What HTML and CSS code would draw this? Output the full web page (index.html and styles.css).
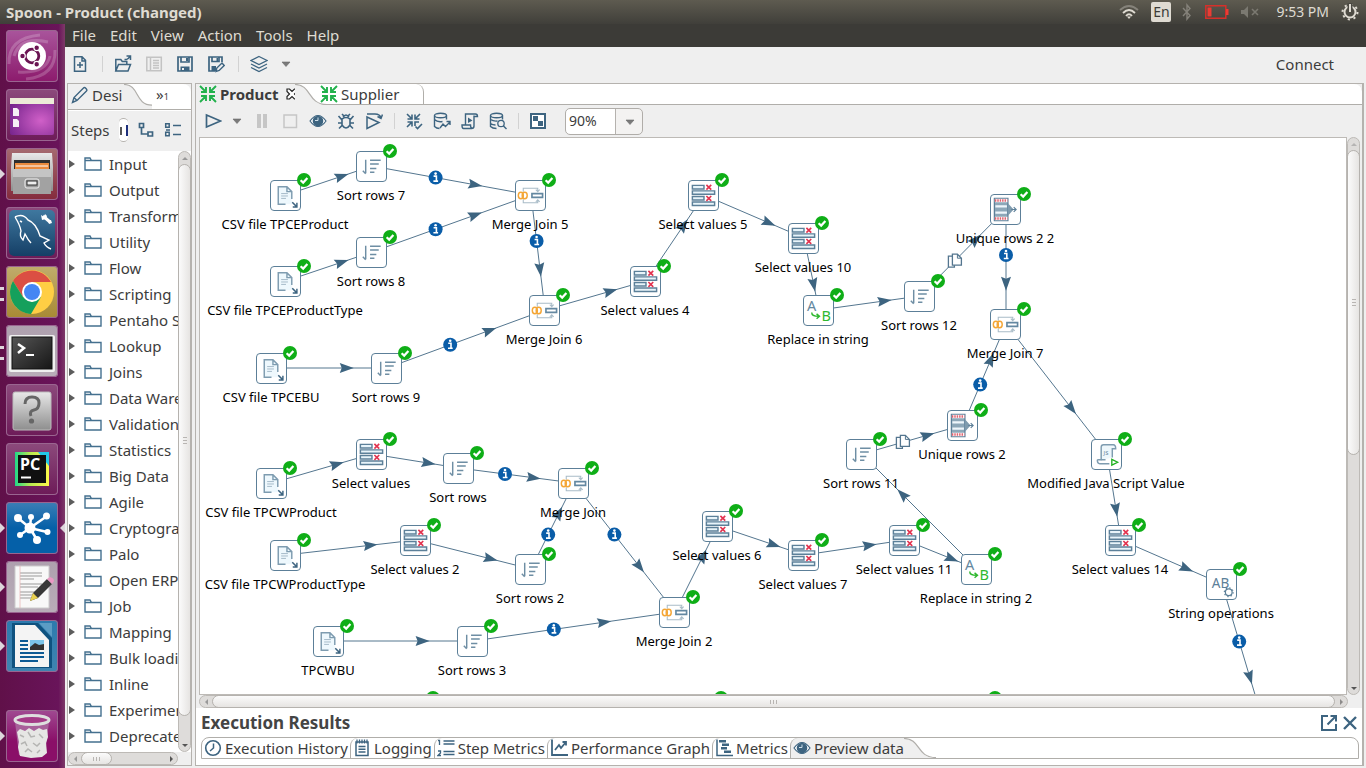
FILE: index.html
```html
<!DOCTYPE html>
<html lang="en">
<head>
<meta charset="utf-8">
<title>Spoon - Product (changed)</title>
<link rel="stylesheet" href="styles.css">
</head>
<body>
<svg class="defs" aria-hidden="true">
  <defs>
    <linearGradient id="metal" x1="0" y1="0" x2="0" y2="1"><stop offset="0" stop-color="#e8e8e8"/><stop offset="1" stop-color="#8e8e8e"/></linearGradient>
    <radialGradient id="desk" cx=".7" cy=".6" r=".8"><stop offset="0" stop-color="#d060c8"/><stop offset="1" stop-color="#76248c"/></radialGradient>
    <linearGradient id="sea" x1="0" y1="0" x2="0" y2="1"><stop offset="0" stop-color="#3f789f"/><stop offset="1" stop-color="#153f66"/></linearGradient>
    <linearGradient id="dark" x1="0" y1="0" x2="1" y2="1"><stop offset="0" stop-color="#555"/><stop offset="1" stop-color="#161616"/></linearGradient>
    <linearGradient id="pc" x1="0" y1="0" x2="1" y2="0"><stop offset="0" stop-color="#21d789"/><stop offset=".45" stop-color="#b8ea50"/><stop offset="1" stop-color="#fcf84a"/></linearGradient>
  </defs>
  <symbol id="i-down" viewBox="0 0 10 6"><path d="M1 1h8L5 5.500z" fill="#7a7a7a" stroke="#6a6a6a" stroke-width=".6"/></symbol>
  <symbol id="i-new" viewBox="0 0 18 18"><path d="M4 1.800h7l3.500 3.500v11H3.500V1.800zM11 2v4h3.500M9 7v6M6 10h6" fill="none" stroke="currentColor" stroke-width="1.500"/></symbol>
  <symbol id="i-open" viewBox="0 0 18 18"><path d="M1.800 16V4.500h5l1.500 2h4.500v3M1.800 16L4.500 9.500h12L14 16zM10.500 4.500h2c1 0 2-1 3.500-3M12.500 1h4v4" fill="none" stroke="currentColor" stroke-width="1.500"/></symbol>
  <symbol id="i-list" viewBox="0 0 18 18"><path d="M1.800 2.300h14.500v13.500H1.800zM5.500 2.500v13M8 5.500h6M8 8h6M8 10.500h6M8 13h6" fill="none" stroke="#c3c3c3" stroke-width="1.500"/></symbol>
  <symbol id="i-save" viewBox="0 0 18 18"><path d="M2 2h14v14H2zM5 2v5h8V2" fill="none" stroke="currentColor" stroke-width="1.700"/><path d="M10 3h2v3h-2zM4.500 11.500h9V16h-9z" fill="currentColor"/><path d="M6 13h2v2H6z" fill="#efefef"/></symbol>
  <symbol id="i-saveas" viewBox="0 0 18 18"><path d="M8 16H2V2h13v5M5 2v4.500h7V2" fill="none" stroke="currentColor" stroke-width="1.700"/><path d="M9.500 3h1.500v3H9.500zM4.500 11H9V16H4.500z" fill="currentColor"/><path d="M9 16.500l.8-3.500 5.200-5 2.200 2.500-5 5z" fill="#efefef" stroke="currentColor" stroke-width="1.400"/></symbol>
  <symbol id="i-layers" viewBox="0 0 18 18"><path d="M9 1.500l8 4-8 4-8-4zM1 9l8 4 8-4M1 12.500l8 4 8-4" fill="none" stroke="currentColor" stroke-width="1.200"/></symbol>
  <symbol id="i-pencil" viewBox="0 0 18 18"><path d="M1.500 16.500l1.500-5L12.500 2q1-1 2.500.5t.5 2.500L6 14.500zM3 11.500l3 3" fill="none" stroke="currentColor" stroke-width="1.400"/></symbol>
  <symbol id="i-tree" viewBox="0 0 18 18"><path d="M2.500 2.500h4v4h-4zM11 11h4.500v4H11zM4.500 6.500V13H11" fill="none" stroke="currentColor" stroke-width="1.700"/></symbol>
  <symbol id="i-rows" viewBox="0 0 18 18"><path d="M1.700 2.700h3.500v3.500H1.700zM1.700 11.200h3.500v3.500H1.700zM9 4.500h8M9 13.500h8M2 9h4" fill="none" stroke="currentColor" stroke-width="1.500"/></symbol>
  <symbol id="i-folder" viewBox="0 0 18 16"><path d="M1 14V2h5l1.500 2.500H17V14zM1 4.500h7" fill="none" stroke="#44708f" stroke-width="1.400"/></symbol>
  <symbol id="i-trans" viewBox="0 0 18 18"><path d="M1 1l5.500 5.500M17 1l-5.500 5.500M1 17l5.500-5.500M17 17l-5.500-5.500M2 7h5V2M11 2v5h5M2 11h5v5M16 11h-5v5" fill="none" stroke="currentColor" stroke-width="1.900"/></symbol>
  <symbol id="i-x" viewBox="0 0 12 12"><path d="M1 1h2.500L6 3.500 8.500 1H11v2.500L8.500 6 11 8.500V11H8.500L6 8.500 3.500 11H1V8.500L3.500 6 1 3.500z" fill="#fff" stroke="#222" stroke-width="1.200"/></symbol>
  <symbol id="i-play" viewBox="0 0 18 18"><path d="M2.500 3l14 6-14 6z" fill="none" stroke="currentColor" stroke-width="1.700"/></symbol>
  <symbol id="i-pause" viewBox="0 0 18 18"><path d="M4 2h4v14H4zM10 2h4v14h-4z" fill="#c6c6c6"/></symbol>
  <symbol id="i-stop" viewBox="0 0 18 18"><path d="M3 3h12.500v12.500H3z" fill="none" stroke="#c6c6c6" stroke-width="1.500"/></symbol>
  <symbol id="i-eye" viewBox="0 0 18 18"><path d="M1 9q8-11 16 0q-8 11-16 0z" fill="#fff" stroke="currentColor" stroke-width="1.200"/><circle cx="9" cy="9" r="5.300" fill="currentColor"/><path d="M9 5.500v3H6" fill="none" stroke="#cfe0ea" stroke-width="1"/></symbol>
  <symbol id="i-bug" viewBox="0 0 18 18"><path d="M5 7q4-3 8 0v6q-4 6-8 0zM6 5.500q3-5 6 0M1.500 4l3.500 4M16.500 4L13 8M1 11h4M13 11h4M2 16.500L5.500 13M16 16.500L12.500 13M5 2l2 2M13 2l-2 2" fill="none" stroke="currentColor" stroke-width="1.600"/></symbol>
  <symbol id="i-replay" viewBox="0 0 18 18"><path d="M2 5l12 5.500-12 6zM2 2h8q5 0 6 4M12.500 4.500L16 6.500l1.500-4" fill="none" stroke="currentColor" stroke-width="1.500"/></symbol>
  <symbol id="i-verify" viewBox="0 0 18 18"><path d="M2 2l5 5M15 2l-5 5M2 15l5-5M2.500 7H7V2.500M10 2.500V7h4.500M2.500 10H7v4.500M10 14v-4h4M10.500 14.500l2 2L17 12" fill="none" stroke="currentColor" stroke-width="1.600"/></symbol>
  <symbol id="i-impact" viewBox="0 0 18 18"><ellipse cx="7.500" cy="3.500" rx="6" ry="2.200" fill="none" stroke="currentColor" stroke-width="1.400"/><path d="M1.500 3.500v11q2 2 5 2M13.500 3.500v4M1.500 7.500q3 3 8 2M7 16l3-4 2.500 2.500L17 10M13.500 9.500H17V13" fill="none" stroke="currentColor" stroke-width="1.400"/></symbol>
  <symbol id="i-sql" viewBox="0 0 18 18"><path d="M4.500 12.500V2h10q2 0 2 2.500H13V14q0 2.500-2.500 2.500h-8Q1 16.500 1 13h8.500q0 3.500 2 3.500M13 5V3.500" fill="none" stroke="currentColor" stroke-width="1.400"/><path d="M7 5.500l4.500 3L7 11z" fill="currentColor"/></symbol>
  <symbol id="i-explore" viewBox="0 0 18 18"><ellipse cx="7.500" cy="3.500" rx="6" ry="2.200" fill="none" stroke="currentColor" stroke-width="1.400"/><path d="M1.500 3.500v11q2 2 6 2M13.500 3.500v4M1.500 7.500q3 2 7 1.500M1.500 11.500q2 1.500 5 1.500" fill="none" stroke="currentColor" stroke-width="1.400"/><circle cx="12" cy="11.500" r="3.200" fill="#efefef" stroke="currentColor" stroke-width="1.300"/><path d="M14.500 14l3 3" stroke="currentColor" stroke-width="1.400"/></symbol>
  <symbol id="i-results" viewBox="0 0 18 18"><path d="M2 2h14v14H2z" fill="#fff" stroke="currentColor" stroke-width="2"/><path d="M4 4h5v5H4zM9 9h5v5H9z" fill="currentColor"/></symbol>
  <symbol id="i-clock" viewBox="0 0 18 18"><circle cx="9" cy="9" r="7.300" fill="none" stroke="currentColor" stroke-width="1.600"/><path d="M9.500 4.500V9L6 12" fill="none" stroke="currentColor" stroke-width="1.500"/></symbol>
  <symbol id="i-log" viewBox="0 0 18 18"><path d="M3 3h12v13.500H3zM5.500 7.500h7M5.500 10.300h7M5.500 13h7" fill="none" stroke="currentColor" stroke-width="1.500"/><path d="M4 .5v4M6.500 .5v4M9 .5v4M11.500 .5v4M14 .5v4" stroke="currentColor" stroke-width="1.300"/></symbol>
  <symbol id="i-steps" viewBox="0 0 18 18"><path d="M1 1.500h1.500V6M1 12h2.500v2L1 16.500h3M6.500 2h11M6.500 5h11M6.500 12.500h11M6.500 15.500h11" fill="none" stroke="currentColor" stroke-width="1.300"/></symbol>
  <symbol id="i-graph" viewBox="0 0 18 18"><path d="M2 .5V16h16M5 11l4-5 2 3 5-6M12.500 3H16v3.500" fill="none" stroke="currentColor" stroke-width="1.800"/></symbol>
  <symbol id="i-gantt" viewBox="0 0 18 18"><path d="M2 .5V16.500h16" fill="none" stroke="currentColor" stroke-width="1.500"/><path d="M4 1h7v2.500H4zM7 4.500h7V7H7zM6 8h6v2.500H6zM9 11.500h7V14H9z" fill="currentColor"/></symbol>
  <symbol id="i-pop" viewBox="0 0 18 18"><path d="M8 2H2v14h14v-6M10.500 2H16v5.500M16 2L7.500 10.500" fill="none" stroke="currentColor" stroke-width="2"/></symbol>
  <symbol id="i-close" viewBox="0 0 18 18"><path d="M3 3l12 12M15 3L3 15" fill="none" stroke="currentColor" stroke-width="2.400"/></symbol>

  <symbol id="n-csv" viewBox="0 0 30 30"><path d="M7.500 6h9l5 5v13h-14z" fill="#eef8fd"/><path d="M15 24H7.500V6h9l5 5v7.500M16.500 6.500V11h5" fill="none" stroke="#7e9cb0" stroke-width="1.500"/><path d="M10.500 13h7M10.500 15.500h7M10.500 18h5" stroke="#a3b9c7" stroke-width="1"/><path d="M22 22l4.500 4.500M26.800 22.500v4.300h-4.300" fill="none" stroke="#3d6480" stroke-width="1.500"/></symbol>
  <symbol id="n-sort" viewBox="0 0 30 30"><path d="M9 8v14M9 22.500L6 19.500M13.500 8.500h11M13.500 12.500h9M13.500 17h6.500M13.500 21h4.500" fill="none" stroke="#6e8ea4" stroke-width="1.500"/></symbol>
  <symbol id="n-merge" viewBox="0 0 30 30"><path d="M7.500 11V7.500h15v3M20.500 9l2 2 2-2M7.500 19v3.500h15v-3M20.500 21.500l2-2 2 2" fill="none" stroke="#a9bcc8" stroke-width="1.100"/><ellipse cx="5" cy="15" rx="2.600" ry="3.300" fill="none" stroke="#f4a636" stroke-width="1.500"/><ellipse cx="9" cy="15" rx="2.600" ry="3.300" fill="none" stroke="#f4a636" stroke-width="1.500"/><path d="M16.500 13h11v4h-11z" fill="#fff" stroke="#6488a1" stroke-width="1.700"/></symbol>
  <symbol id="n-select" viewBox="0 0 30 30"><path d="M3.500 4.500h12v3.700h-12zM3.500 10.200h23v3.600h-23zM3.500 16h12v3.700h-12zM3.500 21.700h23v3.600h-23z" fill="#e8f4fa" stroke="#5c8099" stroke-width="1.500"/><path d="M18 4l5 5M23 4l-5 5M18 15.500l5 5M23 15.500l-5 5" stroke="#e23450" stroke-width="1.700"/></symbol>
  <symbol id="n-replace" viewBox="0 0 30 30"><path d="M8 17q0 4 7 4M13 18.500l3 2.500-3 2.500" fill="none" stroke="#2fb82f" stroke-width="1.500"/></symbol>
  <symbol id="n-unique" viewBox="0 0 30 30"><path d="M3.500 3.500h14v23h-14z" fill="#8da7b8" stroke="#5c7f98" stroke-width="1.300"/><path d="M4 4h13v3.500H4zM4 22.500h13V26H4z" fill="#fff"/><path d="M4 5.800h13M4 24.300h13" stroke="#e2606d" stroke-width="2.600" stroke-dasharray="1.500 1"/><path d="M4.500 10.500h12v2.500H4.500zM4.500 17h12v2.500H4.500z" fill="#eef6fb"/><path d="M17.500 8.500l4 4.500 2 2-2 2-4 4.500z" fill="#7f9bae"/><path d="M21 15h5M23.500 12.500L26 15l-2.500 2.500" fill="none" stroke="#5c7f98" stroke-width="1.200"/></symbol>
  <symbol id="n-js" viewBox="0 0 30 30"><path d="M9.500 21V7.500Q9.500 5 12 5h10q2.500 0 2.500 4H21v9" fill="#eef7fb" stroke="#7e9cb0" stroke-width="1.500"/><path d="M5.500 20.500h8.500M18 24.500H8q-2.500 0-2.500-4" fill="none" stroke="#7e9cb0" stroke-width="1.500"/><path d="M20.500 20l6 3-6 3z" fill="#fff" stroke="#20b020" stroke-width="1.400"/></symbol>
  <symbol id="n-ops" viewBox="0 0 30 30"><circle cx="22.500" cy="23" r="3.500" fill="#fff" stroke="#5c8099" stroke-width="1.300"/><circle cx="22.500" cy="23" r="4.600" fill="none" stroke="#5c8099" stroke-width="1.200" stroke-dasharray="1.400 2.200"/></symbol>
  <symbol id="n-ok" viewBox="0 0 14 14"><circle cx="7" cy="7" r="7" fill="#0fae17"/><path d="M3.600 7.200l2.600 2.400 4.200-4.600" fill="none" stroke="#fff" stroke-width="2.200"/></symbol>
</svg>

<header class="titlebar">
  <h1 class="window-title">Spoon - Product (changed)</h1>
  <div class="indicators">
    <svg class="wifi" width="20" height="16" viewBox="0 0 20 16"><g fill="none" stroke-width="1.800"><path d="M1 6q9-8 18 0" stroke="#85827a"/><path d="M4 9q6-6 12 0M7 12q3-3.500 6 0" stroke="#dfdbd2"/></g><path d="M8 12.500h4l-2 2.500z" fill="#dfdbd2"/></svg>
    <span class="lang">En</span>
    <svg class="bt" width="10" height="18" viewBox="0 0 10 18"><path d="M1 5l7 7.500L5 16V2l3 3.500L1 13" fill="none" stroke="#85827a" stroke-width="1.400"/></svg>
    <svg class="battery" width="24" height="14" viewBox="0 0 24 14"><path d="M.8.800h20v12.400H.8z" fill="none" stroke="#d6302a" stroke-width="1.500"/><path d="M2.500 2.500h4v9h-4zM21 4h2.500v6H21z" fill="#ec3b33"/></svg>
    <svg class="sound" width="18" height="12" viewBox="0 0 18 12"><path d="M0 4h3l4-4v12L3 8H0z" fill="#7b7971"/><path d="M11 3l6 6M17 3l-6 6" stroke="#7b7971" stroke-width="1.600"/></svg>
    <time class="clock">9:53 PM</time>
    <svg width="18" height="18" viewBox="0 0 18 18"><circle cx="9" cy="9" r="5.500" fill="none" stroke="#dfdbd2" stroke-width="2"/><circle cx="9" cy="9" r="7.500" fill="none" stroke="#dfdbd2" stroke-width="2" stroke-dasharray="2.200 3.690"/><path d="M6.500 0h5v9h-5z" fill="#4b4942"/><path d="M9 1v8" stroke="#dfdbd2" stroke-width="2"/></svg>
  </div>
</header>

<div class="desktop">
  <nav class="launcher" aria-label="Launcher">
    <button class="app dash" aria-label="Dash"><svg viewBox="0 0 52 52"><path d="M3 34Q2 8 34 5M49 20Q50 46 20 49M8 26Q14 6 42 12M44 26Q40 44 12 42" fill="none" stroke="#fff" stroke-opacity=".2" stroke-width="3"/><circle cx="26" cy="26" r="14" fill="#fff"/><circle cx="26" cy="26" r="6.800" fill="none" stroke="#6a1452" stroke-width="2.800"/><g fill="#6a1452" stroke="#fff" stroke-width="1.200"><circle cx="16.500" cy="26" r="2.800"/><circle cx="30.700" cy="17.800" r="2.800"/><circle cx="30.700" cy="34.200" r="2.800"/></g></svg></button>
    <button class="app" aria-label="Desktop"><svg viewBox="0 0 52 52"><rect x="4" y="10" width="44" height="36" rx="2" fill="url(#desk)"/><path d="M4 9h44v6H4z" fill="#ecebd8"/><path d="M7 19h4l2 2v6H7zM7 30h4l2 2v6H7z" fill="#f6f0f6"/></svg></button>
    <button class="app files running" aria-label="Files"><svg viewBox="0 0 52 52"><path d="M6 5h40l1 14v24H5V19z" fill="url(#metal)"/><path d="M8 12h36v10H8z" fill="#2f2f2f"/><path d="M9 15h34v7H9z" fill="#e98a3c"/><path d="M10 18h32" stroke="#fff" stroke-width="1"/><path d="M7 21h38v25H7z" fill="#a2a2a2"/><path d="M7 21h38v8H7z" fill="#c4c4c4"/><rect x="19" y="31" width="14" height="9" rx="2" fill="#999" stroke="#f0f0f0"/><rect x="21" y="33" width="10" height="4" fill="#eee" stroke="#333"/></svg></button>
    <button class="app" aria-label="MySQL Workbench"><svg viewBox="0 0 52 52"><rect x="3" y="3" width="46" height="46" rx="5" fill="url(#sea)"/><path d="M9 10q8-4 13 3 8 3 12 16l9 4-5 3q2 4 7 6M9 10q5 8 6 14-2 5 2 9l2-6q3 6 6 9M14 14l2 1" fill="none" stroke="#fff" stroke-width="1.400"/><path d="M37 9l7 6" stroke="#fff" stroke-width="3"/><path d="M35 8l3 2 1-3 2 2-1 3-4 1zM42 14l3-1 1 3-3 1z" fill="#fff"/></svg></button>
    <button class="app chrome running twice" aria-label="Chrome"><svg viewBox="0 0 52 52"><circle cx="26" cy="26" r="22" fill="#ffce44"/><path d="M7 15A22 22 0 0 1 45 16H26L17 31z" fill="#db4f43"/><path d="M7 15A22 22 0 0 0 25 48L35 31 26 36 17 31z" fill="#15a05c"/><circle cx="26" cy="26" r="10" fill="#fff"/><circle cx="26" cy="26" r="8" fill="#4586f3"/></svg></button>
    <button class="app light running twice" aria-label="Terminal"><svg viewBox="0 0 52 52"><rect x="3" y="10" width="46" height="37" rx="2" fill="#f0f0f0"/><rect x="6" y="12" width="40" height="32" fill="url(#dark)" stroke="#111"/><path d="M12 19l6 4-6 5" fill="none" stroke="#fff" stroke-width="2.500"/><path d="M20 30h8" stroke="#fff" stroke-width="2"/></svg></button>
    <button class="app" aria-label="Unknown"><svg viewBox="0 0 52 52"><rect x="7" y="8" width="38" height="38" rx="2" fill="url(#metal)" stroke="#bbb"/><path d="M19 20q0-7 7-7t7 6-5 7-3 6" fill="none" stroke="#666" stroke-width="3"/><circle cx="25.500" cy="37" r="2.600" fill="#666"/></svg></button>
    <button class="app" aria-label="PyCharm"><svg viewBox="0 0 52 52"><path d="M9 9h34v34H9z" fill="url(#pc)"/><path d="M32 9h11v14z" fill="#22c8e8"/><path d="M12 12h28v28H12z" fill="#101010"/><text x="14" y="27" class="pc-text">PC</text><path d="M15 34.500h10" stroke="#fff" stroke-width="2"/></svg></button>
    <button class="app spoon running focused" aria-label="Spoon"><svg viewBox="0 0 52 52"><g stroke="#fff" stroke-width="2.500"><path d="M24 26L12 16M24 26l1-11M24 26l17-12M24 26L14 33M24 26l17 4M24 26l7 12"/></g><g fill="#fff"><circle cx="24" cy="26" r="5.500"/><circle cx="12" cy="16" r="4"/><circle cx="25" cy="15" r="3"/><circle cx="40.500" cy="14" r="3.500"/><circle cx="14" cy="33" r="3"/><circle cx="41.500" cy="30" r="3"/><circle cx="31" cy="38" r="4"/></g></svg></button>
    <button class="app light running" aria-label="Text Editor"><svg viewBox="0 0 52 52"><path d="M9 5h34v42H9z" fill="#f8f8f8" stroke="#ccc"/><path d="M14 12h22M14 15h22M14 18h14M14 23h22M14 26h18M14 31h16M14 34h18M14 37h14" stroke="#999" stroke-width="1"/><path d="M14 5v42" stroke="#eab8b8" stroke-width=".8"/><path d="M24 40l3-8 14-14 5 5-14 14z" fill="#383838"/><path d="M24 40l3-8 5 5z" fill="#e8d050"/><path d="M41 18l3-2q4 1 4 4l-2 3z" fill="#ea98c4"/></svg></button>
    <button class="app writer running" aria-label="Writer"><svg viewBox="0 0 52 52"><path d="M6 3h26l14 15v30H6z" fill="#0f527f"/><path d="M9 5h20l14 15v27H9z" fill="#f4f4f4"/><path d="M33 3h13v14z" fill="#5b9cc4"/><path d="M14 21h8M14 25h8M14 29h8M14 33h24M14 37h24M14 41h18" stroke="#0d5a94" stroke-width="2"/><path d="M24 20h14v10H24z" fill="#7bc5ea"/><path d="M24 30v-3l5-4 4 2 5-1v6z" fill="#333"/></svg></button>
    <button class="app trash running" aria-label="Trash"><svg viewBox="0 0 52 52"><path d="M9 12l4 33h26l4-33z" fill="#a8609a"/><path d="M11 22l3-3 5 2 4-3 5 3 5-3 4 2 4-1 1 8-2 6 1 10-5 4-11 1-11-2-2-9 1-5z" fill="#e6e6e4"/><path d="M14 25l4 2M22 22l3 5 4-1M33 24l4 4M15 34l4-2 2 4M27 33l4 3 3-3M19 42l3-3 4 3M31 43l3-3" fill="none" stroke="#b4b4b2" stroke-width="1.500"/><ellipse cx="26" cy="10" rx="17" ry="4.500" fill="#a43a86" stroke="#dedede" stroke-width="3"/></svg></button>
  </nav>

  <div class="window">
    <nav class="menubar" aria-label="Main menu">
      <button>File</button><button>Edit</button><button>View</button><button>Action</button><button>Tools</button><button>Help</button>
    </nav>
    <div class="toolbar">
      <button class="tool" aria-label="New"><svg><use href="#i-new"/></svg></button>
      <span class="sep"></span>
      <button class="tool" aria-label="Open"><svg><use href="#i-open"/></svg></button>
      <button class="tool" aria-label="Explore" disabled><svg><use href="#i-list"/></svg></button>
      <button class="tool" aria-label="Save"><svg><use href="#i-save"/></svg></button>
      <button class="tool" aria-label="Save as"><svg><use href="#i-saveas"/></svg></button>
      <span class="sep"></span>
      <button class="tool" aria-label="Perspectives"><svg><use href="#i-layers"/></svg></button>
      <button class="drop" aria-label="More perspectives"><svg><use href="#i-down"/></svg></button>
      <button class="connect">Connect</button>
    </div>

    <div class="panes">
      <aside class="side">
        <div class="side-tabs">
          <button class="side-tab"><svg class="icon"><use href="#i-pencil"/></svg><span>Desi</span></button>
          <svg class="swoop" viewBox="0 0 32 26" preserveAspectRatio="none"><path d="M0 0C18 0 12 22 32 22V0z" fill="#fff"/><path d="M0 .5C18 .5 12 22 32 22" fill="none" stroke="#b0aeaa" stroke-width="1.200"/></svg>
          <button class="more-tabs" aria-label="More tabs">»<span>1</span></button>
        </div>
        <div class="steps-bar">
          <label for="find">Steps</label>
          <input id="find" type="text">
          <button class="tool" aria-label="Expand all"><svg><use href="#i-tree"/></svg></button>
          <button class="tool" aria-label="Collapse all"><svg><use href="#i-rows"/></svg></button>
        </div>
        <div class="tree-area">
          <ul class="tree">
            <li>Input</li><li>Output</li><li>Transform</li><li>Utility</li><li>Flow</li><li>Scripting</li><li>Pentaho S</li><li>Lookup</li><li>Joins</li><li>Data Ware</li><li>Validation</li><li>Statistics</li><li>Big Data</li><li>Agile</li><li>Cryptogra</li><li>Palo</li><li>Open ERP</li><li>Job</li><li>Mapping</li><li>Bulk loadi</li><li>Inline</li><li>Experimen</li><li>Deprecate</li>
          </ul>
          <div class="vbar"><i class="up"></i><b class="thumb tree-thumb"></b><i class="dn"></i></div>
        </div>
        <div class="hbar side-hbar"><i class="lf"></i><b class="thumb short-thumb"></b><i class="rt"></i></div>
      </aside>

      <main class="work">
        <div class="tabs" role="tablist">
          <button class="tab active" role="tab"><svg class="icon green"><use href="#i-trans"/></svg><span>Product</span><svg class="x"><use href="#i-x"/></svg></button>
          <svg class="swoop" viewBox="0 0 32 22" preserveAspectRatio="none"><path d="M0 0C17 0 12 22 32 22H0z" fill="#efefef"/><path d="M0 .5C17 .5 12 21.500 32 21.500" fill="none" stroke="#b0aeaa" stroke-width="1.200"/></svg>
          <button class="tab other" role="tab"><svg class="icon green"><use href="#i-trans"/></svg><span>Supplier</span></button>
        </div>
        <div class="runbar">
          <button class="tool" aria-label="Run"><svg><use href="#i-play"/></svg></button>
          <button class="drop" aria-label="Run options"><svg><use href="#i-down"/></svg></button>
          <button class="tool" aria-label="Pause" disabled><svg><use href="#i-pause"/></svg></button>
          <button class="tool" aria-label="Stop" disabled><svg><use href="#i-stop"/></svg></button>
          <button class="tool" aria-label="Preview"><svg><use href="#i-eye"/></svg></button>
          <button class="tool" aria-label="Debug"><svg><use href="#i-bug"/></svg></button>
          <button class="tool" aria-label="Replay"><svg><use href="#i-replay"/></svg></button>
          <span class="sep"></span>
          <button class="tool" aria-label="Verify"><svg><use href="#i-verify"/></svg></button>
          <button class="tool" aria-label="Impact"><svg><use href="#i-impact"/></svg></button>
          <button class="tool" aria-label="SQL"><svg><use href="#i-sql"/></svg></button>
          <button class="tool" aria-label="Explore database"><svg><use href="#i-explore"/></svg></button>
          <span class="sep"></span>
          <button class="tool results-toggle" aria-label="Show results"><svg><use href="#i-results"/></svg></button>
          <span class="zoom"><select aria-label="Zoom"><option>90%</option></select><svg><use href="#i-down"/></svg></span>
        </div>
        <div class="canvas-area">
          <div class="canvas" id="canvas"><svg class="hops" id="hops"></svg></div>
          <div class="vbar"><i class="up dim"></i><b class="thumb canvas-thumb"></b><i class="dn"></i></div>
        </div>
        <div class="hbar canvas-hbar"><i class="lf"></i><b class="thumb"></b><i class="rt dim"></i></div>

        <section class="results">
          <header class="results-head">
            <h2>Execution Results</h2>
            <button class="tool" aria-label="Maximize"><svg><use href="#i-pop"/></svg></button>
            <button class="tool" aria-label="Close"><svg><use href="#i-close"/></svg></button>
          </header>
          <div class="result-tabs" role="tablist">
            <button role="tab" class="rtab"><svg class="icon"><use href="#i-clock"/></svg>Execution History</button>
            <button role="tab" class="rtab"><svg class="icon"><use href="#i-log"/></svg>Logging</button>
            <button role="tab" class="rtab"><svg class="icon"><use href="#i-steps"/></svg>Step Metrics</button>
            <button role="tab" class="rtab"><svg class="icon"><use href="#i-graph"/></svg>Performance Graph</button>
            <button role="tab" class="rtab"><svg class="icon"><use href="#i-gantt"/></svg>Metrics</button>
            <button role="tab" class="rtab on"><svg class="icon"><use href="#i-eye"/></svg>Preview data</button>
            <svg class="swoop" viewBox="0 0 32 22" preserveAspectRatio="none"><path d="M0 0C17 0 12 22 32 22H0z" fill="#efefef"/><path d="M0 .5C17 .5 12 21.500 32 21.500" fill="none" stroke="#b0aeaa" stroke-width="1.200"/></svg>
          </div>
        </section>
      </main>
    </div>
  </div>
</div>
<script src="diagram.js"></script>
</body>
</html>
```

FILE: styles.css
```css
* { box-sizing: border-box; }
html, body { height: 100%; }
body {
  margin: 0;
  display: flex;
  flex-direction: column;
  overflow: hidden;
  font: 15px/20px "Noto Sans", "Open Sans", sans-serif;
  color: #3c3c3c;
  background: #efefef;
}
button {
  font: inherit;
  color: inherit;
  background: none;
  border: 0;
  padding: 0;
  margin: 0;
}
.defs { position: absolute; width: 0; height: 0; }
.icon { width: 18px; height: 18px; flex: none; color: #3d6480; }
.green { color: #22b14c; }

/* title bar */
.titlebar {
  flex: none;
  height: 24px;
  display: flex;
  align-items: center;
  justify-content: space-between;
  padding: 0 7px 1px 6px;
  background: linear-gradient(#5e5b50, #403f3a);
  color: #dfdbd2;
}
.window-title { margin: 0; font-size: 15px; line-height: 20px; font-weight: 700; }
.indicators { display: flex; align-items: center; font-size: 14px; }
.wifi, .battery, .clock { margin-right: 12px; }
.sound { margin-right: 17px; }
.bt { margin-right: 13px; }
.lang {
  width: 20px;
  height: 20px;
  margin-right: 11px;
  background: #dfdbd2;
  border-radius: 2px;
  color: #3c3b37;
  text-align: center;
}

.desktop { flex: 1; display: flex; min-height: 0; }

/* launcher */
.launcher {
  flex: none;
  width: 65px;
  display: flex;
  flex-direction: column;
  gap: 7px;
  padding: 6px;
  background: linear-gradient(90deg, #601049, #69145a 90%, #7d3a68);
}
.app {
  position: relative;
  flex: none;
  width: 52px;
  height: 52px;
  border-radius: 4px;
  background: linear-gradient(#8c4a7c, #6d1b58);
  box-shadow: inset 0 0 0 1px #9a6590;
}
.app svg { display: block; width: 52px; height: 52px; }
.dash { background: linear-gradient(#a9559c, #8c1a6c); }
.files { background: linear-gradient(#a56a70, #842a3c); }
.chrome { background: linear-gradient(#c0ac6c, #a88a34); }
.light { background: linear-gradient(#aea0ae, #b9adb9); }
.spoon { background: linear-gradient(#3c7eb6, #0560a8 50%); }
.writer { background: linear-gradient(#2c7aae, #3f84b0); }
.trash { margin-top: auto; background: linear-gradient(#a04a92, #8a0f68 60%); }
.pc-text { font: 700 16px "Noto Sans", sans-serif; fill: #fff; }
.running::before, .focused::after {
  content: "";
  position: absolute;
  top: 21px;
  left: -6px;
  border: 5px solid transparent;
  border-left-color: #ddd6db;
  border-right: 0;
}
.twice::before { border: solid #ddd6db; border-width: 3px 0; height: 8px; width: 4px; }
.focused::after { left: auto; right: -7px; border: 5px solid transparent; border-right-color: #ddd6db; border-left: 0; }

.window { flex: 1; min-width: 0; display: flex; flex-direction: column; }
.menubar {
  flex: none;
  height: 23px;
  display: flex;
  gap: 14px;
  padding: 0 0 2px 7px;
  background: #3c3b37;
  color: #dfdbd2;
  align-items: center;
}
.toolbar, .runbar { display: flex; align-items: center; flex: none; }
.toolbar { height: 36px; gap: 12px; padding: 0 32px 2px 6px; }
.tool { width: 18px; height: 18px; flex: none; color: #3d6480; }
.tool svg { display: block; width: 18px; height: 18px; }
.toolbar .tool { width: 19px; }
.drop { width: 11px; height: 6px; flex: none; }
.drop svg { display: block; width: 10px; height: 6px; }
.sep { width: 1px; height: 16px; background: #d2d2d2; flex: none; }
.toolbar .sep { margin-right: -1px; }
.connect { margin-left: auto; }

.panes {
  flex: 1;
  min-height: 0;
  display: flex;
  gap: 3px;
  padding: 0 2px 2px;
}

/* side panel */
.side {
  flex: none;
  width: 125px;
  display: flex;
  flex-direction: column;
  border: 1px solid #b5b2ae;
}
.side-tabs {
  flex: none;
  height: 26px;
  display: flex;
  border-bottom: 1px solid #b0aeaa;
  border-radius: 8px 8px 0 0;
}
.side-tab { display: flex; align-items: center; gap: 3px; padding: 0 0 4px 3px; width: 56px; }
.side-tabs .swoop { width: 28px; }
.swoop { width: 32px; height: 100%; flex: none; display: block; }
.more-tabs { flex: 1; background: #fff; font-size: 15px; text-align: left; padding: 0 0 4px 4px; border-radius: 0 8px 0 0; }
.more-tabs span { font-size: 9px; }
.steps-bar {
  flex: none;
  height: 41px;
  display: flex;
  align-items: center;
  gap: 9px;
  padding: 0 0 2px 3px;
  border-top: 1px solid #fff;
}
.steps-bar input {
  width: 9px;
  height: 24px;
  border: solid #b5b2ae;
  border-width: 1px 0;
  border-radius: 5px;
  padding: 0;
  background: linear-gradient(#1d2f7c, #1d2f7c) 7px 6px / 2px 11px no-repeat, linear-gradient(#555, #555) 1px 8px / 2px 8px no-repeat, #fff;
}
.tree-area { flex: 1; min-height: 0; display: flex; background: #fff; }
.tree {
  flex: 1;
  min-width: 0;
  overflow: hidden;
  margin: 0;
  padding: 0;
  list-style: none;
  white-space: nowrap;
}
.tree li { display: flex; align-items: center; height: 26px; }
.tree li::before {
  content: "";
  flex: none;
  border: solid transparent;
  border-width: 4px 0 4px 6px;
  border-left-color: #5c5c5c;
  margin: 0 9px 0 1px;
}
.tree .icon { width: 18px; height: 16px; margin-right: 7px; }

/* scroll bars */
.vbar, .hbar {
  flex: none;
  display: flex;
  align-items: center;
  border: 1px solid #bdbab6;
  border-radius: 7px;
  background: #dedcda;
}
.vbar { width: 13px; flex-direction: column; }
.hbar { height: 13px; }
.vbar i, .hbar i { flex: none; width: 12px; height: 12px; display: flex; align-items: center; justify-content: center; }
.vbar i::before, .hbar i::before { content: ""; border: 3px solid transparent; }
.up::before { border-top: 0 !important; border-bottom-color: #999 !important; }
.dn::before { border-bottom: 0 !important; border-top-color: #555 !important; }
.lf::before { border-left: 0 !important; border-right-color: #999 !important; }
.rt::before { border-right: 0 !important; border-left-color: #555 !important; }
.dim { opacity: .6; }
.thumb {
  flex: 1;
  border: 1px solid #b5b2ae;
  border-radius: 7px;
  background: linear-gradient(90deg, #fbfbfb, #e6e4e2);
  display: flex;
  align-items: center;
  justify-content: center;
}
.thumb::after { content: ""; }
.vbar .thumb { width: 13px; }
.vbar .thumb::after { width: 4px; height: 7px; background: repeating-linear-gradient(#b8b5b2 0 1px, transparent 1px 3px); }
.hbar .thumb { height: 13px; background: linear-gradient(#fbfbfb, #e6e4e2); }
.hbar .thumb::after { width: 7px; height: 4px; background: repeating-linear-gradient(90deg, #b8b5b2 0 1px, transparent 1px 3px); }
.tree-thumb { margin-bottom: 23px; }
.side-hbar { margin: 0 13px 0 0; }
.hbar .short-thumb { flex: none; width: 31px; }
.side-hbar .rt { margin-left: auto; }

/* work area */
.work {
  flex: 1;
  min-width: 0;
  display: flex;
  flex-direction: column;
  border: 1px solid #b5b2ae;
  border-right-width: 2px;
}
.tabs {
  flex: none;
  height: 21px;
  display: flex;
  background: #fff;
  box-shadow: inset 0 -1px #b0aeaa;
  border-radius: 8px 8px 0 0;
}
.tab { display: flex; align-items: center; gap: 3px; padding: 0 0 2px 3px; }
.active { width: 99px; background: #efefef; font-weight: 700; border-radius: 8px 0 0 0; }
.active .x { width: 12px; height: 12px; margin-left: 4px; flex: none; }
.tabs .swoop { margin-right: -10px; }
.other { width: 107px; border-right: 1px solid #b0aeaa; border-radius: 0 8px 0 0; }
.runbar { height: 32px; gap: 10px; padding-left: 8px; }
.runbar .sep { margin-left: 1px; }
.zoom { position: relative; margin-left: 8px; }
.zoom select {
  appearance: none;
  display: block;
  width: 78px;
  height: 27px;
  border: 1px solid #b0ada9;
  border-radius: 5px;
  padding: 0 3px;
  font: 14px/20px "Noto Sans", "Open Sans", sans-serif;
  color: #3c3c3c;
  background: linear-gradient(90deg, #fff 49px, #b5b2ae 49px 50px, #f3f2f1 50px);
}
.zoom svg { position: absolute; right: 8px; top: 11px; width: 10px; height: 6px; pointer-events: none; }

.canvas-area { flex: 1; min-height: 0; display: flex; margin: 0 2px 0 3px; }
.canvas {
  position: relative;
  flex: 1;
  min-width: 0;
  overflow: hidden;
  background: #fff;
  border: 1px solid #bdbab6;
}
.canvas-thumb { flex: none; height: 305px; }
.canvas-area .dn { margin-top: auto; }
.canvas-hbar { margin: 0 14px 0 3px; }
.hops { position: absolute; inset: 0; width: 100%; height: 100%; }
.hop { stroke: #54768f; stroke-width: 1; }
.arrow { fill: #3d6480; }
.node {
  position: absolute;
  width: 190px;
  margin: -15px 0 0 -96px;
  display: flex;
  flex-direction: column;
  align-items: center;
}
.box {
  position: relative;
  width: 31px;
  height: 31px;
  border: 1px solid #5c7f98;
  border-radius: 4px;
  background: #fff;
}
.box .glyph { display: block; width: 29px; height: 29px; }
.box .ok { position: absolute; right: -11px; top: -8px; width: 14px; height: 14px; }
.box text { font-family: "Noto Sans", sans-serif; }
.label { margin-top: 4px; font-size: 13px; line-height: 18px; color: #000; white-space: nowrap; }

/* results */
.results { flex: none; background: #fff; padding: 0 3px 6px 5px; }
.results-head { display: flex; align-items: center; gap: 3px; height: 29px; }
.results-head h2 { margin: 0 auto 0 0; font-size: 17px; line-height: 20px; font-weight: 700; color: #444; }
.result-tabs {
  display: flex;
  height: 22px;
  border: 1px solid #b0aeaa;
  border-radius: 8px 8px 0 0;
}
.rtab {
  display: flex;
  align-items: center;
  gap: 3px;
  padding: 0 2px;
  border-left: 1px solid #b0aeaa;
  border-radius: 8px 0 0 0;
  white-space: nowrap;
}
.rtab:first-child { border-left: 0; }
.on { background: #efefef; padding-right: 0; }
```

FILE: diagram.js
```js
const SVG = "http://www.w3.org/2000/svg";

// id: [type, label, centre x, centre y] in canvas coordinates
const steps = {
  ep: ["csv", "CSV file TPCEProduct", 86, 57],
  s7: ["sort", "Sort rows 7", 172, 28],
  et: ["csv", "CSV file TPCEProductType", 86, 143],
  s8: ["sort", "Sort rows 8", 172, 114],
  eb: ["csv", "CSV file TPCEBU", 72, 230],
  s9: ["sort", "Sort rows 9", 187, 230],
  m5: ["merge", "Merge Join 5", 331, 57],
  m6: ["merge", "Merge Join 6", 345, 172],
  v4: ["select", "Select values 4", 446, 143],
  v5: ["select", "Select values 5", 504, 57],
  v10: ["select", "Select values 10", 604, 100],
  r1: ["replace", "Replace in string", 619, 172],
  s12: ["sort", "Sort rows 12", 720, 158],
  u22: ["unique", "Unique rows 2 2", 806, 71],
  m7: ["merge", "Merge Join 7", 806, 186],
  u2: ["unique", "Unique rows 2", 763, 287],
  s11: ["sort", "Sort rows 11", 662, 316],
  js: ["js", "Modified Java Script Value", 907, 316],
  v14: ["select", "Select values 14", 921, 402],
  so: ["ops", "String operations", 1022, 446],
  sv: ["select", "Select values", 172, 316],
  sr: ["sort", "Sort rows", 259, 330],
  wp: ["csv", "CSV file TPCWProduct", 72, 345],
  wt: ["csv", "CSV file TPCWProductType", 86, 417],
  v2: ["select", "Select values 2", 216, 402],
  s2: ["sort", "Sort rows 2", 331, 431],
  mj: ["merge", "Merge Join", 374, 345],
  wb: ["csv", "TPCWBU", 129, 503],
  s3: ["sort", "Sort rows 3", 273, 503],
  m2: ["merge", "Merge Join 2", 475, 474],
  v6: ["select", "Select values 6", 518, 388],
  v7: ["select", "Select values 7", 604, 417],
  v11: ["select", "Select values 11", 705, 402],
  r2: ["replace", "Replace in string 2", 777, 431],
  a: ["select", "", 215, 575],
  b: ["select", "", 503, 575],
  c: ["select", "", 777, 575],
  end: ["select", "", 1065, 590]
};

// [from, to, marker]
const hops = [
  ["ep", "s7"], ["s7", "m5", "info"], ["et", "s8"], ["s8", "m5", "info"],
  ["eb", "s9"], ["s9", "m6", "info"], ["m5", "m6", "info"], ["m6", "v4"],
  ["v4", "v5"], ["v5", "v10"], ["v10", "r1"], ["r1", "s12"],
  ["s12", "u22", "copy"], ["u22", "m7", "info"], ["u2", "m7", "info"],
  ["s11", "u2", "copy"], ["m7", "js"], ["js", "v14"], ["v14", "so"],
  ["so", "end", "info"], ["wp", "sv"], ["sv", "sr"], ["sr", "mj", "info"],
  ["wt", "v2"], ["v2", "s2"], ["s2", "mj", "info"], ["mj", "m2", "info"],
  ["wb", "s3"], ["s3", "m2", "info"], ["m2", "v6"], ["v6", "v7"],
  ["v7", "v11"], ["v11", "r2"], ["r2", "s11"]
];

const markers = {
  info: '<circle r="7" fill="#0a5da8"/><path d="M-2 -1.500H.8V3.500M-2.200 3.500H2.500" fill="none" stroke="#fff" stroke-width="1.600"/><circle cx="0" cy="-4" r="1.300" fill="#fff"/>',
  copy: '<path d="M-6-5h6v11h-6z" fill="#fff" stroke="#54768f" stroke-width="1.300"/><path d="M-2-7h5l4 4v7h-9z" fill="#fff" stroke="#54768f" stroke-width="1.300"/><path d="M3-7v4h4" fill="none" stroke="#54768f"/>'
};

const letters = {
  replace: '<text x="3" y="15" font-size="15" fill="#6487a0">A</text><text x="18" y="26" font-size="15" fill="#2fb82f">B</text>',
  ops: '<text x="5" y="19" font-size="14" fill="#5c8099">AB</text>',
  js: '<text x="12" y="16" font-size="6" fill="#5c8099">JS</text>'
};

const canvas = document.getElementById("canvas");
const layer = document.getElementById("hops");

let drawing = "";
for (const [from, to, marker] of hops) {
  const [, , x1, y1] = steps[from];
  const [, , x2, y2] = steps[to];
  const at = t => `${x1 + (x2 - x1) * t} ${y1 + (y2 - y1) * t}`;
  const angle = Math.atan2(y2 - y1, x2 - x1) * 180 / Math.PI;
  drawing += `<line class="hop" x1="${x1}" y1="${y1}" x2="${x2}" y2="${y2}"/>`;
  drawing += `<path class="arrow" transform="translate(${at(0.65)}) rotate(${angle})" d="M7 0L-7 -5L-5 0L-7 5z"/>`;
  if (marker) drawing += `<g transform="translate(${at(0.4)})">${markers[marker]}</g>`;
}
layer.innerHTML = drawing;

for (const [type, label, x, y] of Object.values(steps)) {
  const node = document.createElement("div");
  node.className = "node";
  node.style.left = x + "px";
  node.style.top = y + "px";
  node.innerHTML = `<div class="box"><svg class="glyph" viewBox="0 0 30 30"><use href="#n-${type}"/>${letters[type] || ""}</svg><svg class="ok" viewBox="0 0 14 14"><use href="#n-ok"/></svg></div><span class="label">${label}</span>`;
  canvas.appendChild(node);
}

for (const item of document.querySelectorAll(".tree li")) {
  const icon = document.createElementNS(SVG, "svg");
  icon.setAttribute("class", "icon");
  icon.innerHTML = '<use href="#i-folder"/>';
  item.prepend(icon);
}
```
